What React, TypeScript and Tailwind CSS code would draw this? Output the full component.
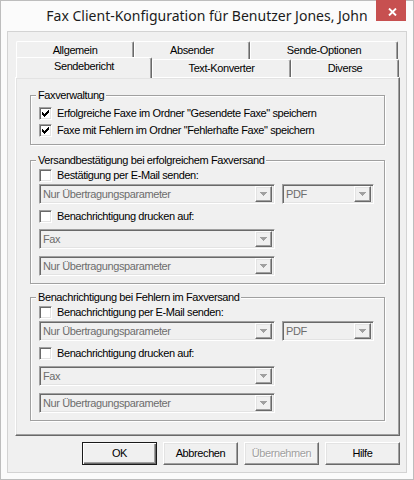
import React from 'react';

// classic 3D bevels used by the dialog controls
const raised =
  'border border-t-white border-l-white border-r-[#696969] border-b-[#696969] shadow-[inset_-1px_-1px_0_#a0a0a0,inset_1px_1px_0_#e3e3e3]';
const sunken =
  'border border-t-[#a0a0a0] border-l-[#a0a0a0] border-r-white border-b-white shadow-[inset_1px_1px_0_#696969,inset_-1px_-1px_0_#e3e3e3]';

const CHECK_COLS = [2, 3, 4, 3, 2, 1, 0];

function CheckBox({ checked = false }: { checked?: boolean }) {
  return (
    <span className={`w-[13px] h-[13px] shrink-0 bg-white flex items-center justify-center ${sunken}`}>
      {checked && (
        <svg width="7" height="7" viewBox="0 0 7 7" shapeRendering="crispEdges">
          {CHECK_COLS.map((y, x) => (
            <rect key={x} x={x} y={y} width="1" height="3" fill="#000" />
          ))}
        </svg>
      )}
    </span>
  );
}

function CheckRow({ label, checked, className = '' }: { label: string; checked?: boolean; className?: string }) {
  return (
    <div className={`flex items-center gap-[5px] ${className}`}>
      <CheckBox checked={checked} />
      <span className="whitespace-nowrap">{label}</span>
    </div>
  );
}

function Combo({ value, className = '' }: { value: string; className?: string }) {
  return (
    <div className={`h-[20px] bg-[#f0f0f0] flex items-center justify-between p-[2px] ${sunken} ${className}`}>
      <span className="pl-[1px] text-[#6d6d6d] whitespace-nowrap">{value}</span>
      <span className={`w-[17px] h-[16px] shrink-0 bg-[#f0f0f0] flex items-center justify-center ${raised}`}>
        <svg width="7" height="4" viewBox="0 0 7 4" shapeRendering="crispEdges">
          <path d="M0 0h7v1H0zM1 1h5v1H1zM2 2h3v1H2zM3 3h1v1H3z" fill="#a0a0a0" />
        </svg>
      </span>
    </div>
  );
}

function Group({ title, className = '', children }: { title: string; className?: string; children: React.ReactNode }) {
  return (
    <div className={`w-[355px] border border-[#a0a0a0] shadow-[1px_1px_0_#fff,inset_1px_1px_0_#fff] pl-[8px] ${className}`}>
      <div className="-mt-[7px] -ml-[3px] w-fit px-[2px] h-[13px] bg-[#f0f0f0] whitespace-nowrap">{title}</div>
      {children}
    </div>
  );
}

function NotifyGroup({ title, mailLabel, className = '' }: { title: string; mailLabel: string; className?: string }) {
  return (
    <Group title={title} className={`pb-[7px] ${className}`}>
      <CheckRow label={mailLabel} className="h-[16px]" />
      <div className="mt-[1px] flex gap-[7px]">
        <Combo value="Nur Übertragungsparameter" className="w-[236px]" />
        <Combo value="PDF" className="w-[92px]" />
      </div>
      <CheckRow label="Benachrichtigung drucken auf:" className="mt-[4px] h-[16px]" />
      <Combo value="Fax" className="mt-[5px] w-[236px]" />
      <Combo value="Nur Übertragungsparameter" className="mt-[7px] w-[236px]" />
    </Group>
  );
}

const backTabs = [
  { label: 'Allgemein', w: 'w-[118px]' },
  { label: 'Absender', w: 'w-[116px]' },
  { label: 'Sende-Optionen', w: 'w-[148px]' },
];

const tabEdge =
  'border-t border-l border-r border-t-white border-l-white border-r-[#696969] shadow-[inset_-1px_0_0_#a0a0a0] rounded-t-[2px]';

function DialogButton({ label, isDefault, disabled }: { label: string; isDefault?: boolean; disabled?: boolean }) {
  const frame = isDefault
    ? 'border border-[#1a1a1a] shadow-[inset_1px_1px_0_#fff,inset_-1px_-1px_0_#696969,inset_-2px_-2px_0_#a0a0a0]'
    : raised;
  return (
    <button
      className={`w-[75px] h-[23px] bg-[#f0f0f0] flex items-center justify-center ${frame} ${
        disabled ? 'text-[#a0a0a0] [text-shadow:1px_1px_0_#fff]' : 'text-black'
      }`}
    >
      {label}
    </button>
  );
}

export default function App() {
  return (
    <div className="w-[414px] h-[480px] bg-[#fbfbfb] border border-[#bdbdbd] flex flex-col font-['Liberation_Sans',Arial,sans-serif] text-[11px] leading-[13px] tracking-[-0.4px] text-black">
      {/* caption */}
      <div className="relative h-[30px] shrink-0 flex items-center justify-center">
        <span className="font-['Noto_Sans',sans-serif] text-[14px] leading-[18px] tracking-normal text-[#1b1b1b]">
          Fax Client-Konfiguration für Benutzer Jones, John
        </span>
        <div className="absolute -top-[1px] right-[7px] w-[30px] h-[21px] bg-[#c75050] flex items-center justify-center pt-[2px] pl-[2px]">
          <svg width="9" height="8" viewBox="0 0 9 8">
            <path d="M1 0.5 L8 7.5 M8 0.5 L1 7.5" stroke="#fff" strokeWidth="1.9" />
          </svg>
        </div>
      </div>

      {/* client area */}
      <div className="mx-[6px] h-[442px] border border-[#d3d3d3] bg-[#f0f0f0] pt-[9px] pl-[7px] flex flex-col">
        <div className="w-[385px] flex flex-col">
          <div className="h-[18px] flex pl-[1px]">
            {backTabs.map((t) => (
              <div key={t.label} className={`${t.w} h-[18px] flex items-center justify-center ${tabEdge}`}>
                {t.label}
              </div>
            ))}
          </div>
          <div className="h-[18px] flex items-start pl-[1px]">
            <div className={`relative z-10 w-[136px] h-[21px] -mt-[2px] bg-[#f0f0f0] flex justify-center pt-[2px] ${tabEdge}`}>
              Sendebericht
            </div>
            <div className={`w-[139px] h-[18px] flex items-center justify-center ${tabEdge}`}>Text-Konverter</div>
            <div className={`w-[108px] h-[18px] flex items-center justify-center ${tabEdge}`}>Diverse</div>
          </div>

          {/* tab page */}
          <div className="h-[359px] border border-t-white border-l-white border-r-[#696969] border-b-[#696969] shadow-[inset_-1px_-1px_0_#a0a0a0,inset_1px_1px_0_#e3e3e3] pt-[17px] pl-[14px]">
            <Group title="Faxverwaltung" className="pb-[5px]">
              <CheckRow label={'Erfolgreiche Faxe im Ordner "Gesendete Faxe" speichern'} checked className="mt-[3px] h-[17px]" />
              <CheckRow label={'Faxe mit Fehlern im Ordner "Fehlerhafte Faxe" speichern'} checked className="h-[17px]" />
            </Group>
            <NotifyGroup
              title="Versandbestätigung bei erfolgreichem Faxversand"
              mailLabel="Bestätigung per E-Mail senden:"
              className="mt-[15px]"
            />
            <NotifyGroup
              title="Benachrichtigung bei Fehlern im Faxversand"
              mailLabel="Benachrichtigung per E-Mail senden:"
              className="mt-[13px]"
            />
          </div>

          <div className="mt-[6px] flex justify-end gap-[6px]">
            <DialogButton label="OK" isDefault />
            <DialogButton label="Abbrechen" />
            <DialogButton label="Übernehmen" disabled />
            <DialogButton label="Hilfe" />
          </div>
        </div>
      </div>
    </div>
  );
}
